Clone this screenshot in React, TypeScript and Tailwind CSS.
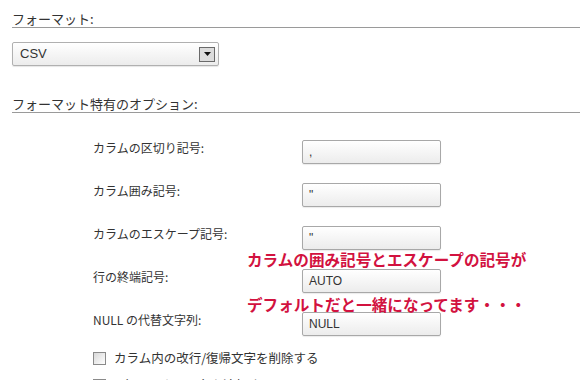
const rows = [
  { label: 'カラムの区切り記号:', value: ',' },
  { label: 'カラム囲み記号:', value: '"' },
  { label: 'カラムのエスケープ記号:', value: '"' },
  { label: '行の終端記号:', value: 'AUTO' },
  { label: 'NULL の代替文字列:', value: 'NULL' },
]

const checks = ['カラム内の改行/復帰文字を削除する', '1 行目にカラム名を追加する']

function Field({ value }: { value: string }) {
  return (
    <div className="w-[139px] h-[24px] flex items-center pl-[6px] border border-[#a8a8a8] rounded-[2px] bg-gradient-to-b from-white to-[#ececec] shadow-[0_1px_1px_rgba(0,0,0,0.08)] text-[12px] text-[#333] font-['Liberation_Sans',sans-serif]">
      {value}
    </div>
  )
}

export default function App() {
  return (
    <div className="relative w-[580px] h-[380px] overflow-hidden bg-white pl-[12px] text-[#333] antialiased font-['Noto_Sans_CJK_JP','Noto_Sans',sans-serif]">
      {/* フォーマット */}
      <h2 className="mt-[12px] text-[13px] leading-[14px] pb-[1px] border-b border-[#9a9a9a] font-normal">
        フォーマット:
      </h2>
      <div className="mt-[14px] w-[207px] h-[24px] flex items-center justify-between pl-[7px] pr-[3px] border border-[#b0b0b0] rounded-[2px] bg-gradient-to-b from-white to-[#ececec] shadow-[0_1px_1px_rgba(0,0,0,0.1)]">
        <span className="text-[13px] font-['Liberation_Sans',sans-serif] text-[#333]">CSV</span>
        <span className="w-[16px] h-[15px] flex items-center justify-center border border-[#6a6a6a] bg-[#dcdcdc]">
          <svg width="7" height="4" viewBox="0 0 7 4">
            <path d="M0 0h7L3.5 4z" fill="#111" />
          </svg>
        </span>
      </div>

      {/* オプション */}
      <h2 className="mt-[31px] text-[13px] leading-[14px] pb-[1px] border-b border-[#9a9a9a] font-normal">
        フォーマット特有のオプション:
      </h2>

      <div className="mt-[27px] pl-[81px] flex flex-col gap-[19px]">
        {rows.map((r) => (
          <div key={r.label} className="flex items-start">
            <span className="w-[209px] pt-[1px] text-[12px] leading-[14px]">{r.label}</span>
            <Field value={r.value} />
          </div>
        ))}
      </div>

      <div className="mt-[15px] pl-[81px] flex flex-col gap-[13px]">
        {checks.map((c) => (
          <label key={c} className="flex items-center gap-[8px] text-[12.5px] leading-[14px]">
            <span className="w-[13px] h-[13px] border border-[#8a8a8a] bg-gradient-to-br from-[#d8d8d8] to-white shrink-0" />
            {c}
          </label>
        ))}
      </div>

      {/* annotation */}
      <div className="absolute left-[247px] top-[252px] text-[15.6px] leading-[14px] font-bold text-[#d2123f] whitespace-nowrap">
        カラムの囲み記号とエスケープの記号が
      </div>
      <div className="absolute left-[247px] top-[298px] text-[15.6px] leading-[13px] font-bold text-[#d2123f] whitespace-nowrap">
        デフォルトだと一緒になってます・・・
      </div>
    </div>
  )
}
